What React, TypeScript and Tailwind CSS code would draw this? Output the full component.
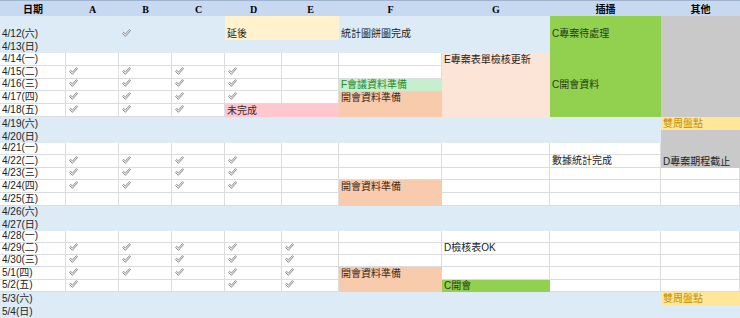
import type { ReactNode } from "react";

const headers = ["日期", "A", "B", "C", "D", "E", "F", "G", "插播", "其他"];

const dates = [
  { d: "4/12(六)", off: true },
  { d: "4/13(日)", off: true },
  { d: "4/14(一)" },
  { d: "4/15(二)" },
  { d: "4/16(三)" },
  { d: "4/17(四)" },
  { d: "4/18(五)" },
  { d: "4/19(六)", off: true },
  { d: "4/20(日)", off: true },
  { d: "4/21(一)" },
  { d: "4/22(二)" },
  { d: "4/23(三)" },
  { d: "4/24(四)" },
  { d: "4/25(五)" },
  { d: "4/26(六)", off: true },
  { d: "4/27(日)", off: true },
  { d: "4/28(一)" },
  { d: "4/29(二)" },
  { d: "4/30(三)" },
  { d: "5/1(四)" },
  { d: "5/2(五)" },
  { d: "5/3(六)", off: true },
  { d: "5/4(日)", off: true },
];

type Merge = {
  r: number;
  c: number;
  rows: number;
  cols: number;
  cls: string;
  body?: ReactNode;
};

const FirstLine = ({ children, color = "" }: { children: ReactNode; color?: string }) => (
  <div className={`flex h-[13px] items-end pl-[2px] leading-[12px] whitespace-nowrap ${color}`}>
    {children}
  </div>
);

const Bottom = ({ children, color = "" }: { children: ReactNode; color?: string }) => (
  <div className={`flex h-full items-end pl-[2px] leading-[12px] whitespace-nowrap ${color}`}>
    {children}
  </div>
);

const merges: Merge[] = [
  { r: 0, c: 4, rows: 1, cols: 2, cls: "col-span-2 bg-[#fff2cc]", body: <Bottom>延後</Bottom> },
  {
    r: 0,
    c: 8,
    rows: 7,
    cols: 1,
    cls: "row-span-7 bg-[#92d050]",
    body: (
      <div className="flex flex-col pl-[2px] leading-[12px] whitespace-nowrap text-[#253d12]">
        <div className="flex h-[24px] items-end">C專案待處理</div>
        <div className="h-[39px]" />
        <div className="flex h-[12px] items-end">C開會資料</div>
      </div>
    ),
  },
  { r: 0, c: 9, rows: 7, cols: 1, cls: "row-span-7 bg-[#c9c9c9]" },
  { r: 2, c: 7, rows: 5, cols: 1, cls: "row-span-5 bg-[#fce4d6]", body: <FirstLine>E專案表單檢核更新</FirstLine> },
  { r: 4, c: 6, rows: 1, cols: 1, cls: "bg-[#c6efce]", body: <Bottom color="text-[#1f8a2e]">F會議資料準備</Bottom> },
  { r: 5, c: 6, rows: 2, cols: 1, cls: "row-span-2 bg-[#f8cbad]", body: <FirstLine color="text-[#3b2a1c]">開會資料準備</FirstLine> },
  { r: 6, c: 4, rows: 1, cols: 2, cls: "col-span-2 bg-[#ffc7ce]", body: <Bottom color="text-[#3a2626]">未完成</Bottom> },
  { r: 7, c: 9, rows: 1, cols: 1, cls: "bg-[#ffe699]", body: <Bottom color="text-[#bf8f00]">雙周盤點</Bottom> },
  { r: 8, c: 9, rows: 3, cols: 1, cls: "row-span-3 bg-[#c9c9c9]", body: <Bottom>D專案期程截止</Bottom> },
  { r: 12, c: 6, rows: 2, cols: 1, cls: "row-span-2 bg-[#f8cbad]", body: <FirstLine color="text-[#3b2a1c]">開會資料準備</FirstLine> },
  { r: 19, c: 6, rows: 2, cols: 1, cls: "row-span-2 bg-[#f8cbad]", body: <FirstLine color="text-[#3b2a1c]">開會資料準備</FirstLine> },
  { r: 20, c: 7, rows: 1, cols: 1, cls: "bg-[#92d050]", body: <Bottom color="text-[#253d12]">C開會</Bottom> },
  { r: 21, c: 9, rows: 1, cols: 1, cls: "bg-[#ffe699]", body: <Bottom color="text-[#bf8f00]">雙周盤點</Bottom> },
];

const notes: Record<string, string> = {
  "0-6": "統計圖餅圖完成",
  "10-8": "數據統計完成",
  "17-7": "D檢核表OK",
};

const checks: Record<number, number[]> = {
  0: [2],
  3: [1, 2, 3, 4],
  4: [1, 2, 3, 4],
  5: [1, 2, 3, 4],
  6: [1, 2, 3],
  10: [1, 2, 3, 4],
  11: [1, 2, 3, 4],
  12: [1, 2, 3, 4],
  17: [1, 2, 3, 4, 5],
  18: [1, 2, 3, 4, 5],
  19: [1, 2, 3, 4, 5],
  20: [1, 4, 5],
};

function Check() {
  return (
    <svg width="9" height="8" viewBox="0 0 10 9" className="shrink-0">
      <path
        d="M0.6 5.1 L1.9 3.9 L3.8 5.7 L8.4 0.7 L9.5 1.8 L3.8 8.2 Z"
        fill="#fff"
        stroke="#777"
        strokeWidth="1"
        strokeLinejoin="round"
      />
    </svg>
  );
}

function buildCells() {
  const covered = new Set<string>();
  const cells: ReactNode[] = [];

  dates.forEach((row, i) => {
    headers.forEach((h, j) => {
      const key = `${i}-${j}`;
      if (covered.has(key)) return;

      const m = merges.find((x) => x.r === i && x.c === j);
      if (m) {
        for (let a = 0; a < m.rows; a++)
          for (let b = 0; b < m.cols; b++) covered.add(`${i + a}-${j + b}`);
        cells.push(
          <div key={key} className={m.cls}>
            {m.body}
          </div>
        );
        return;
      }

      const base = row.off ? "bg-[#ddebf7]" : "border-r border-b border-[#dcdcdc] bg-white";
      let body: ReactNode = null;
      if (j === 0) body = <Bottom>{row.d}</Bottom>;
      else if (notes[key]) body = <Bottom>{notes[key]}</Bottom>;
      else if (checks[i]?.includes(j))
        body = (
          <div className="flex h-full items-end pb-[3px] pl-[3px]">
            <Check />
          </div>
        );

      cells.push(
        <div key={key} className={base}>
          {body}
        </div>
      );
    });
  });

  return cells;
}

export default function App() {
  return (
    <div className="h-[318px] w-[740px] overflow-hidden bg-white font-['Liberation_Sans','Noto_Sans_CJK_TC',sans-serif] text-[10px] text-[#222]">
      <div className="grid grid-cols-[66px_53px_53px_53px_57px_57px_103px_108px_111px_79px] grid-rows-[16px_24px_13px_13px_13px_12px_13px_13px_13px_13px_12px_13px_12px_13px_13px_12px_13px_12px_12px_12px_13px_12px_13px_13px]">
        {headers.map((h) => (
          <div
            key={h}
            className="flex items-center justify-center border-t border-[#9fb3cf] bg-[#c6d9f1] pt-[1px] font-['Liberation_Serif','Noto_Sans_CJK_TC',serif] text-[10px] font-bold text-black"
          >
            {h}
          </div>
        ))}
        {buildCells()}
      </div>
    </div>
  );
}
